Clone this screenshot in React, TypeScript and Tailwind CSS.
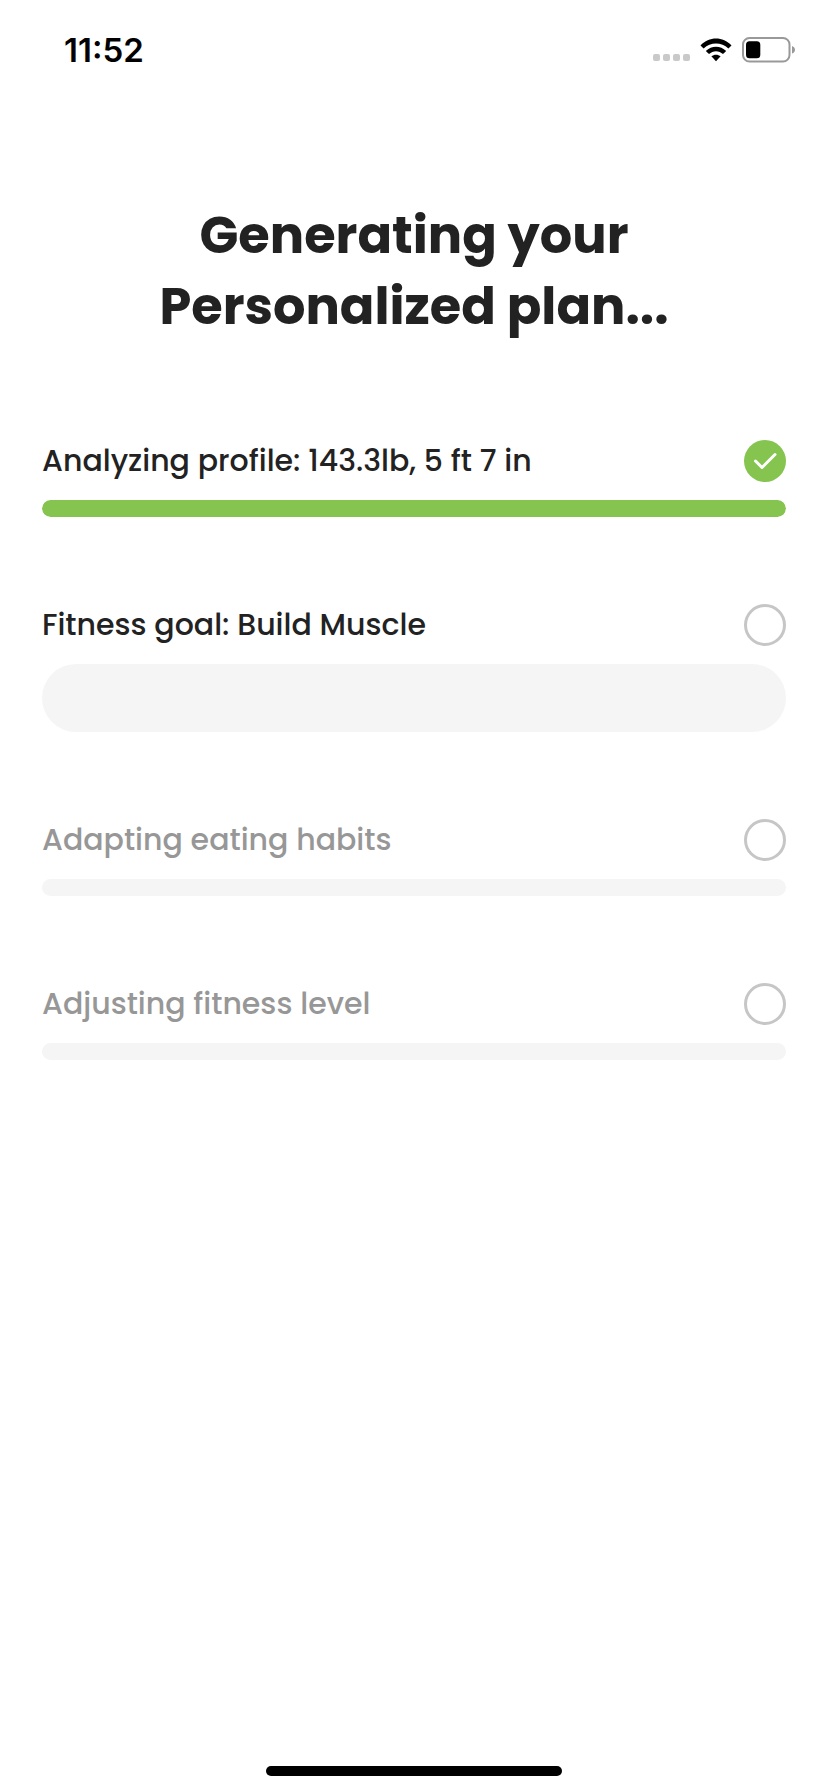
type Step = {
  label: string;
  status: "done" | "active" | "pending";
  progress: number;
};

const steps: Step[] = [
  { label: "Analyzing profile: 143.3lb, 5 ft 7 in", status: "done", progress: 100 },
  { label: "Fitness goal: Build Muscle", status: "active", progress: 0 },
  { label: "Adapting eating habits", status: "pending", progress: 0 },
  { label: "Adjusting fitness level", status: "pending", progress: 0 },
];

function WifiIcon() {
  return (
    <svg viewBox="0 0 32 24" className="h-6 w-8" aria-hidden="true">
      <path d="M0.5 7.4C9 -1.8 23 -1.8 31.5 7.4L28.4 10.5C21.5 3.7 10.5 3.7 3.6 10.5Z" />
      <path d="M5.8 13C11.5 7.2 20.5 7.2 26.2 13L23 16.1C19 12.2 13 12.2 9 16.1Z" />
      <path d="M11.4 18.3C14 16.2 18 16.2 20.6 18.3L16 23.2Z" />
    </svg>
  );
}

function BatteryIcon() {
  return (
    <svg viewBox="0 0 54 26" className="h-[26px] w-[54px]" aria-hidden="true">
      <rect x="1" y="1" width="46.5" height="23.5" rx="6.5" fill="none" stroke="#999" strokeWidth="2" />
      <rect x="4" y="4.2" width="14.3" height="17" rx="3.5" />
      <path d="M50 9C54 10.3 54 15.3 50 16.6Z" fill="#999" />
    </svg>
  );
}

function StatusBar() {
  return (
    <div className="flex h-[100px] items-center justify-between pr-8 pl-16 font-['Inter',sans-serif] text-black">
      <span className="text-[33px] leading-10 font-semibold">11:52</span>
      <div className="flex items-center gap-2.5">
        <div className="flex gap-[3px] pt-3.5">
          {[0, 1, 2, 3].map((dot) => (
            <span key={dot} className="size-[7px] rounded-xs bg-[#c9c9c9]" />
          ))}
        </div>
        <WifiIcon />
        <BatteryIcon />
      </div>
    </div>
  );
}

function StepMark({ done }: { done: boolean }) {
  if (!done) {
    return <span className="size-[42px] shrink-0 rounded-full border-3 border-[#c6c6c6]" />;
  }
  return (
    <span className="flex size-[42px] shrink-0 items-center justify-center rounded-full bg-[#84c44f]">
      <svg viewBox="0 0 24 18" className="h-[18px] w-6" fill="none" stroke="#fff" strokeWidth="3" strokeLinecap="round" strokeLinejoin="round" aria-hidden="true">
        <path d="M2.5 9L9 15.5L22 2.5" />
      </svg>
    </span>
  );
}

function StepRow({ step }: { step: Step }) {
  return (
    <li>
      <div className="flex items-center justify-between gap-4">
        <span className={`text-[30px] leading-10 font-medium ${step.status === "pending" ? "text-[#979797]" : "text-[#222]"}`}>
          {step.label}
        </span>
        <StepMark done={step.status === "done"} />
      </div>
      <div
        role="progressbar"
        aria-label={step.label}
        aria-valuenow={step.progress}
        className={`mt-[18px] overflow-hidden rounded-full bg-[#f5f5f5] ${step.status === "active" ? "h-[68px]" : "h-[17px]"}`}
      >
        <div className="h-full rounded-full bg-[#84c44f]" style={{ width: `${step.progress}%` }} />
      </div>
    </li>
  );
}

export default function App() {
  return (
    <div className="flex min-h-screen flex-col bg-white font-['Poppins','Inter',sans-serif]">
      <StatusBar />
      <main className="flex-1 px-[42px] pt-[100px]">
        <h1 className="text-center text-[51px] leading-[71px] font-bold text-[#222]">
          Generating your
          <br />
          Personalized plan...
        </h1>
        <ul className="mt-[98px] flex flex-col gap-[87px]">
          {steps.map((step) => (
            <StepRow key={step.label} step={step} />
          ))}
        </ul>
      </main>
      <div className="flex justify-center pb-4">
        <div className="h-2.5 w-[296px] rounded-full bg-black" />
      </div>
    </div>
  );
}
